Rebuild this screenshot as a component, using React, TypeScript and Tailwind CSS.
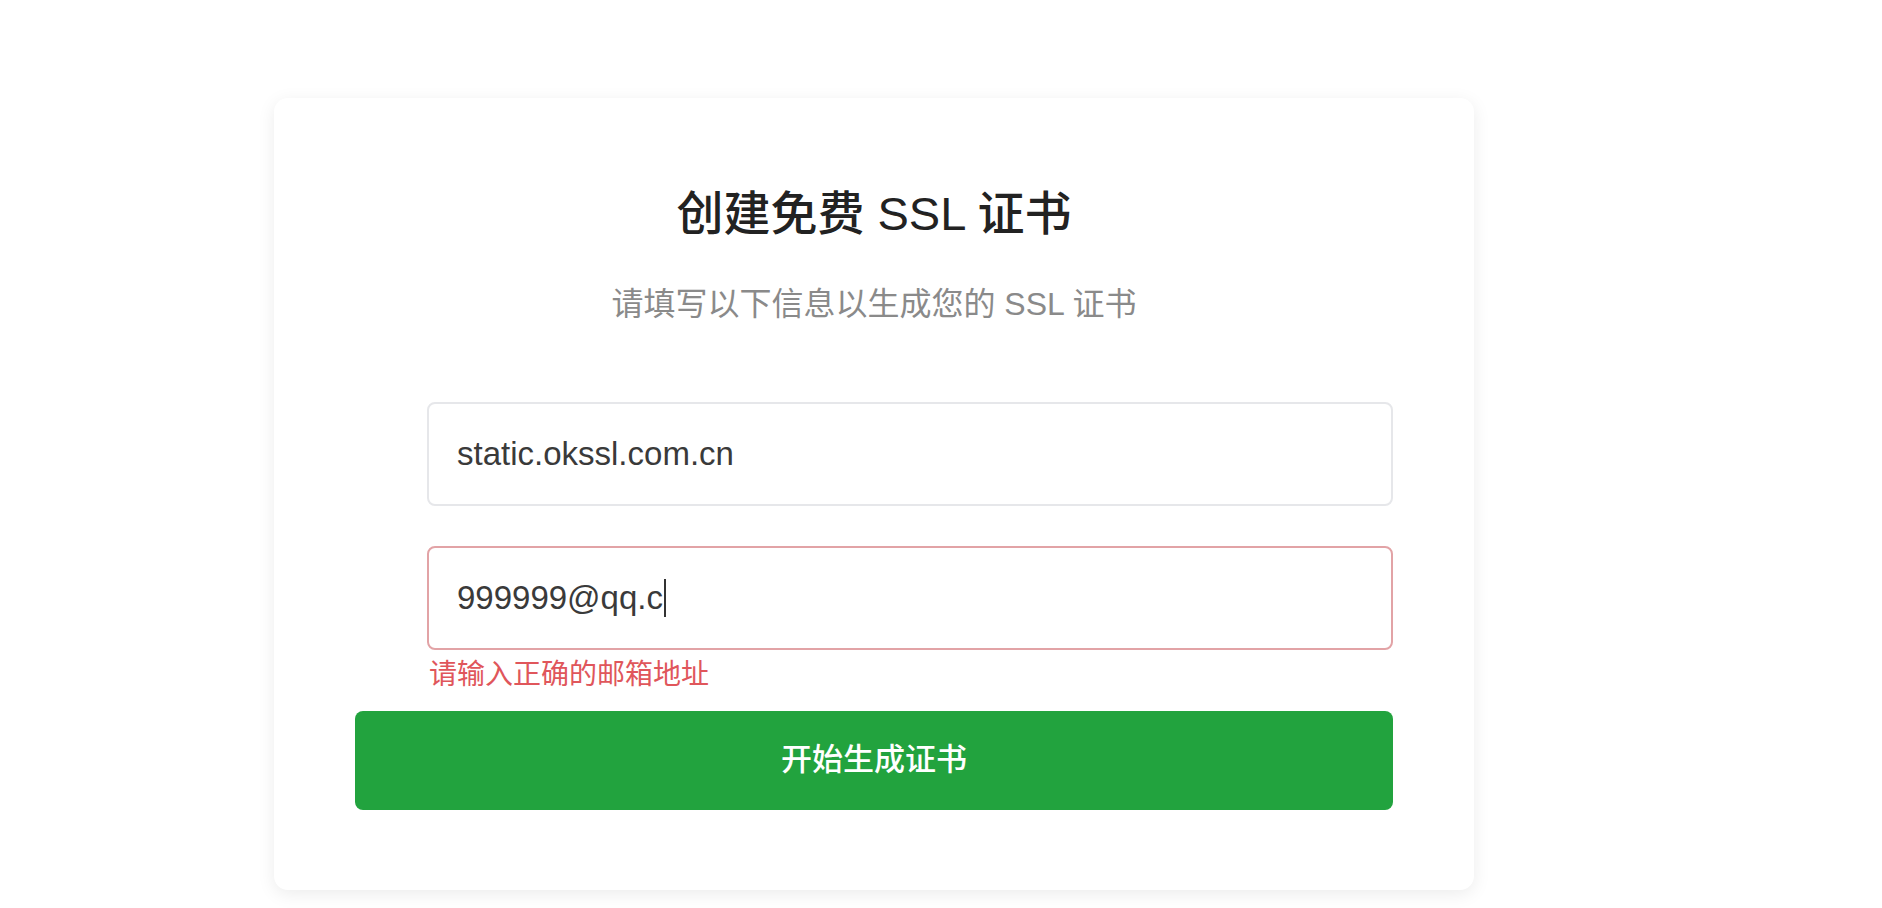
export default function App() {
  return (
    <div
      className="min-h-screen bg-white pt-[98px]"
      style={{ fontFamily: '"Liberation Sans", "Noto Sans CJK SC", sans-serif' }}
    >
      <div className="ml-[274px] w-[1200px] rounded-[14px] bg-white px-[81px] pt-[86px] pb-[80px] shadow-[0_4px_18px_rgba(0,0,0,0.08)]">
        <h1 className="text-center text-[47px] leading-[60px] font-medium text-[#222]">
          创建免费 SSL 证书
        </h1>
        <p className="mt-[37px] text-center text-[32px] leading-[46px] text-[#8a8a8a]">
          请填写以下信息以生成您的 SSL 证书
        </p>

        <div className="mt-[75px] pl-[72px]">
          <div className="flex h-[104px] items-center rounded-[8px] border-2 border-[#e6e7ea] px-[28px] text-[33px] text-[#3a3a3a]">
            static.okssl.com.cn
          </div>
          <div className="mt-[40px] flex h-[104px] items-center rounded-[8px] border-2 border-[#e2a3a6] px-[28px] text-[33px] text-[#3a3a3a]">
            <span>999999@qq.c</span>
            <span className="ml-[1px] h-[38px] w-[2px] bg-[#333]" />
          </div>
          <div className="mt-[7px] pl-[2px] text-[28px] leading-[35px] text-[#e0565b]">
            请输入正确的邮箱地址
          </div>
        </div>

        <button className="mt-[19px] flex h-[99px] w-full items-center justify-center rounded-[8px] bg-[#22a33e] text-[31px] font-medium text-white">
          开始生成证书
        </button>
      </div>
    </div>
  );
}
